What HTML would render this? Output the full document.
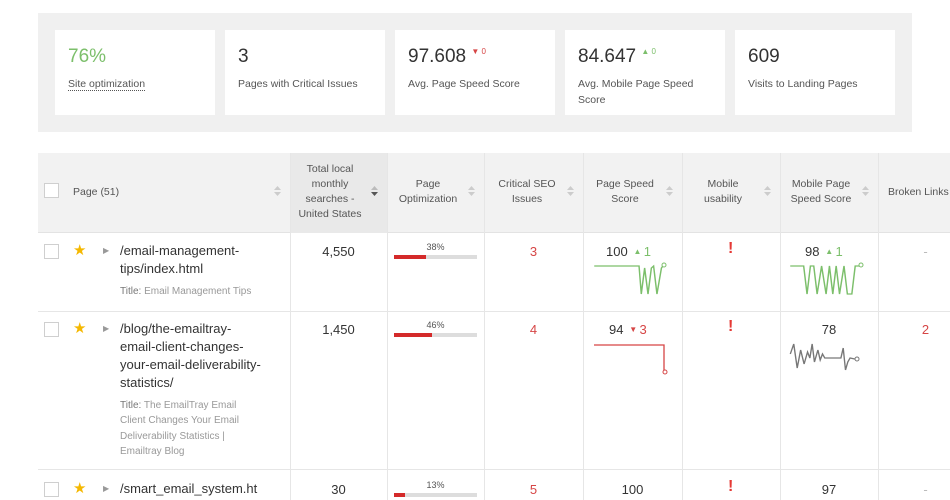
<!DOCTYPE html>
<html><head><meta charset="utf-8"><style>
*{margin:0;padding:0;box-sizing:border-box}
body{width:950px;height:500px;overflow:hidden;background:#fff;font-family:"Liberation Sans",sans-serif;color:#333;position:relative}
.a{position:absolute}
.panel{left:38px;top:13px;width:874px;height:119px;background:#f0f0f0}
.card{top:30px;width:160px;height:85px;background:#fff}
.big{position:absolute;left:13px;top:16px;font-size:19px;color:#333}
.lbl{position:absolute;left:13px;top:46px;font-size:10.5px;color:#555;line-height:16px;width:140px}
.hdr{left:38px;top:153px;width:912px;height:80px;background:#f2f2f2;border-bottom:1px solid #e3e3e3}
.vl{top:153px;width:1px;height:347px;background:#e6e6e6}
.hl{left:38px;width:912px;height:1px;background:#e6e6e6}
.ht{font-size:10.5px;color:#555;text-align:center;line-height:15px}
.cb{width:15px;height:15px;border:1px solid #cfcfcf;background:#fff}
.sort{width:7px;height:12px}
.star{color:#f5b800;font-size:15px}
.arr{font-size:8px;color:#999}
.url{font-size:13px;color:#333;line-height:17.5px;width:170px;white-space:nowrap}
.ttl{font-size:10px;color:#999;line-height:15.3px;width:135px}
.ttl b{font-weight:normal;color:#777}
.num{font-size:13px;color:#333;text-align:center}
.red{color:#d64545}
.bar{width:83px;height:4px;background:#ddd}
.bar i{display:block;height:4px;background:#d42a2a}
.pct{font-size:9px;color:#555;width:83px;text-align:center}
.ex{color:#e53935;font-weight:bold;font-size:16px}
</style></head><body>
<div class="a panel"></div>
<div class="a card" style="left:55px"><div class="big" style="color:#7cbf6b">76%</div><div class="lbl"><span style="border-bottom:1px dotted #555">Site optimization</span></div></div>
<div class="a card" style="left:225px"><div class="big">3</div><div class="lbl">Pages with Critical Issues</div></div>
<div class="a card" style="left:395px"><div class="big">97.608 <span style="font-size:8px;color:#d64545;vertical-align:8px">▼ 0</span></div><div class="lbl">Avg. Page Speed Score</div></div>
<div class="a card" style="left:565px"><div class="big">84.647 <span style="font-size:8px;color:#7cbf6b;vertical-align:8px">▲ 0</span></div><div class="lbl">Avg. Mobile Page Speed Score</div></div>
<div class="a card" style="left:735px"><div class="big">609</div><div class="lbl">Visits to Landing Pages</div></div>

<div class="a hdr"></div>
<div class="a" style="left:290px;top:153px;width:97px;height:80px;background:#e9e9e9"></div>
<div class="a vl" style="left:290px"></div><div class="a vl" style="left:387px"></div><div class="a vl" style="left:484px"></div><div class="a vl" style="left:583px"></div><div class="a vl" style="left:682px"></div><div class="a vl" style="left:780px"></div><div class="a vl" style="left:878px"></div>
<div class="a hl" style="top:311px"></div><div class="a hl" style="top:469px"></div>

<div class="a cb" style="left:44px;top:183px"></div>
<div class="a ht" style="left:73px;top:185px">Page (51)</div>
<svg class="a sort" style="left:274px;top:185px" viewBox="0 0 7 12"><path d="M0 5L3.5 1L7 5ZM0 7L3.5 11L7 7Z" fill="#ccc"/></svg>
<div class="a ht" style="left:294px;top:162px;width:72px">Total local monthly searches - United States</div>
<svg class="a sort" style="left:371px;top:185px" viewBox="0 0 7 12"><path d="M0 5L3.5 1L7 5Z" fill="#bbb"/><path d="M0 7L3.5 11L7 7Z" fill="#555"/></svg>
<div class="a ht" style="left:392px;top:177px;width:72px">Page Optimization</div>
<svg class="a sort" style="left:468px;top:185px" viewBox="0 0 7 12"><path d="M0 5L3.5 1L7 5ZM0 7L3.5 11L7 7Z" fill="#ccc"/></svg>
<div class="a ht" style="left:489px;top:177px;width:76px">Critical SEO Issues</div>
<svg class="a sort" style="left:567px;top:185px" viewBox="0 0 7 12"><path d="M0 5L3.5 1L7 5ZM0 7L3.5 11L7 7Z" fill="#ccc"/></svg>
<div class="a ht" style="left:588px;top:177px;width:74px">Page Speed Score</div>
<svg class="a sort" style="left:666px;top:185px" viewBox="0 0 7 12"><path d="M0 5L3.5 1L7 5ZM0 7L3.5 11L7 7Z" fill="#ccc"/></svg>
<div class="a ht" style="left:688px;top:177px;width:70px">Mobile usability</div>
<svg class="a sort" style="left:764px;top:185px" viewBox="0 0 7 12"><path d="M0 5L3.5 1L7 5ZM0 7L3.5 11L7 7Z" fill="#ccc"/></svg>
<div class="a ht" style="left:785px;top:177px;width:72px">Mobile Page Speed Score</div>
<svg class="a sort" style="left:862px;top:185px" viewBox="0 0 7 12"><path d="M0 5L3.5 1L7 5ZM0 7L3.5 11L7 7Z" fill="#ccc"/></svg>
<div class="a ht" style="left:888px;top:185px;white-space:nowrap">Broken Links</div>

<!-- row1 -->
<div class="a cb" style="left:44px;top:244px"></div>
<div class="a star" style="left:73px;top:241px">★</div>
<div class="a arr" style="left:103px;top:246px">▶</div>
<div class="a url" style="left:120px;top:242px">/email-management-<br>tips/index.html</div>
<div class="a ttl" style="left:120px;top:284px"><b>Title:</b> Email Management Tips</div>
<div class="a num" style="left:290px;top:244px;width:97px">4,550</div>
<div class="a pct" style="left:394px;top:242px">38%</div>
<div class="a bar" style="left:394px;top:255px"><i style="width:32px"></i></div>
<div class="a num red" style="left:484px;top:244px;width:99px">3</div>
<div class="a num" style="left:606px;top:244px">100 <span style="color:#7cbf6b;font-size:8px;vertical-align:2px">&nbsp;▲&nbsp;</span><span style="color:#7cbf6b">1</span></div>
<svg class="a" style="left:592px;top:262px" width="80" height="36"><g transform="scale(1.12,1)"><path d="M2 4H42L44 32L47 6L50 32L53 6L55 4L58 32L62 6L64 3" fill="none" stroke="#7cbf6b" stroke-width="1.3"/></g><circle cx="72" cy="3" r="2" fill="#fff" stroke="#7cbf6b"/></svg>
<div class="a ex" style="left:728px;top:240px">!</div>
<div class="a num" style="left:805px;top:244px">98 <span style="color:#7cbf6b;font-size:8px;vertical-align:2px">&nbsp;▲&nbsp;</span><span style="color:#7cbf6b">1</span></div>
<svg class="a" style="left:788px;top:262px" width="80" height="36"><g transform="scale(1.12,1)"><path d="M2 4H14L17 32L20 4H23L26 32L30 4L34 32L37 4L40 32L43 4L46 32L50 4L53 32L55 32L57 32L60 4H64L65 2" fill="none" stroke="#7cbf6b" stroke-width="1.3"/></g><circle cx="73" cy="3" r="2" fill="#fff" stroke="#7cbf6b"/></svg>
<div class="a num" style="left:878px;top:244px;width:95px;color:#bbb">-</div>

<!-- row2 -->
<div class="a cb" style="left:44px;top:322px"></div>
<div class="a star" style="left:73px;top:319px">★</div>
<div class="a arr" style="left:103px;top:324px">▶</div>
<div class="a url" style="left:120px;top:320px;line-height:18px">/blog/the-emailtray-<br>email-client-changes-<br>your-email-deliverability-<br>statistics/</div>
<div class="a ttl" style="left:120px;top:398px"><b>Title:</b> The EmailTray Email Client Changes Your Email Deliverability Statistics | Emailtray Blog</div>
<div class="a num" style="left:290px;top:322px;width:97px">1,450</div>
<div class="a pct" style="left:394px;top:320px">46%</div>
<div class="a bar" style="left:394px;top:333px"><i style="width:38px"></i></div>
<div class="a num red" style="left:484px;top:322px;width:99px">4</div>
<div class="a num" style="left:609px;top:322px">94 <span style="color:#d64545;font-size:8px;vertical-align:2px">&nbsp;▼&nbsp;</span><span style="color:#d64545">3</span></div>
<svg class="a" style="left:592px;top:340px" width="80" height="40"><path d="M2 5H72V31" fill="none" stroke="#d64545" stroke-width="1.3"/><circle cx="73" cy="32" r="2" fill="#fff" stroke="#d64545"/></svg>
<div class="a ex" style="left:728px;top:318px">!</div>
<div class="a num" style="left:780px;top:322px;width:98px">78</div>
<svg class="a" style="left:788px;top:340px" width="80" height="36"><g transform="scale(1.15,1)"><path d="M2 14L5 4L8 28L11 10L14 24L17 12L19 18L21 4L23 22L26 10L28 20L30 14L32 18L35 18H46L48 8L50 30L52 22L54 18L58 19" fill="none" stroke="#777" stroke-width="1.2"/></g><circle cx="69" cy="19" r="2" fill="#fff" stroke="#777"/></svg>
<div class="a num red" style="left:878px;top:322px;width:95px">2</div>

<!-- row3 -->
<div class="a cb" style="left:44px;top:482px"></div>
<div class="a star" style="left:73px;top:479px">★</div>
<div class="a arr" style="left:103px;top:484px">▶</div>
<div class="a url" style="left:120px;top:480px;width:170px;overflow:hidden">/smart_email_system.ht</div>
<div class="a num" style="left:290px;top:482px;width:97px">30</div>
<div class="a pct" style="left:394px;top:480px">13%</div>
<div class="a bar" style="left:394px;top:493px"><i style="width:11px"></i></div>
<div class="a num red" style="left:484px;top:482px;width:99px">5</div>
<div class="a num" style="left:583px;top:482px;width:99px">100</div>
<div class="a ex" style="left:728px;top:478px">!</div>
<div class="a num" style="left:780px;top:482px;width:98px">97</div>
<div class="a num" style="left:878px;top:482px;width:95px;color:#bbb">-</div>
</body></html>
